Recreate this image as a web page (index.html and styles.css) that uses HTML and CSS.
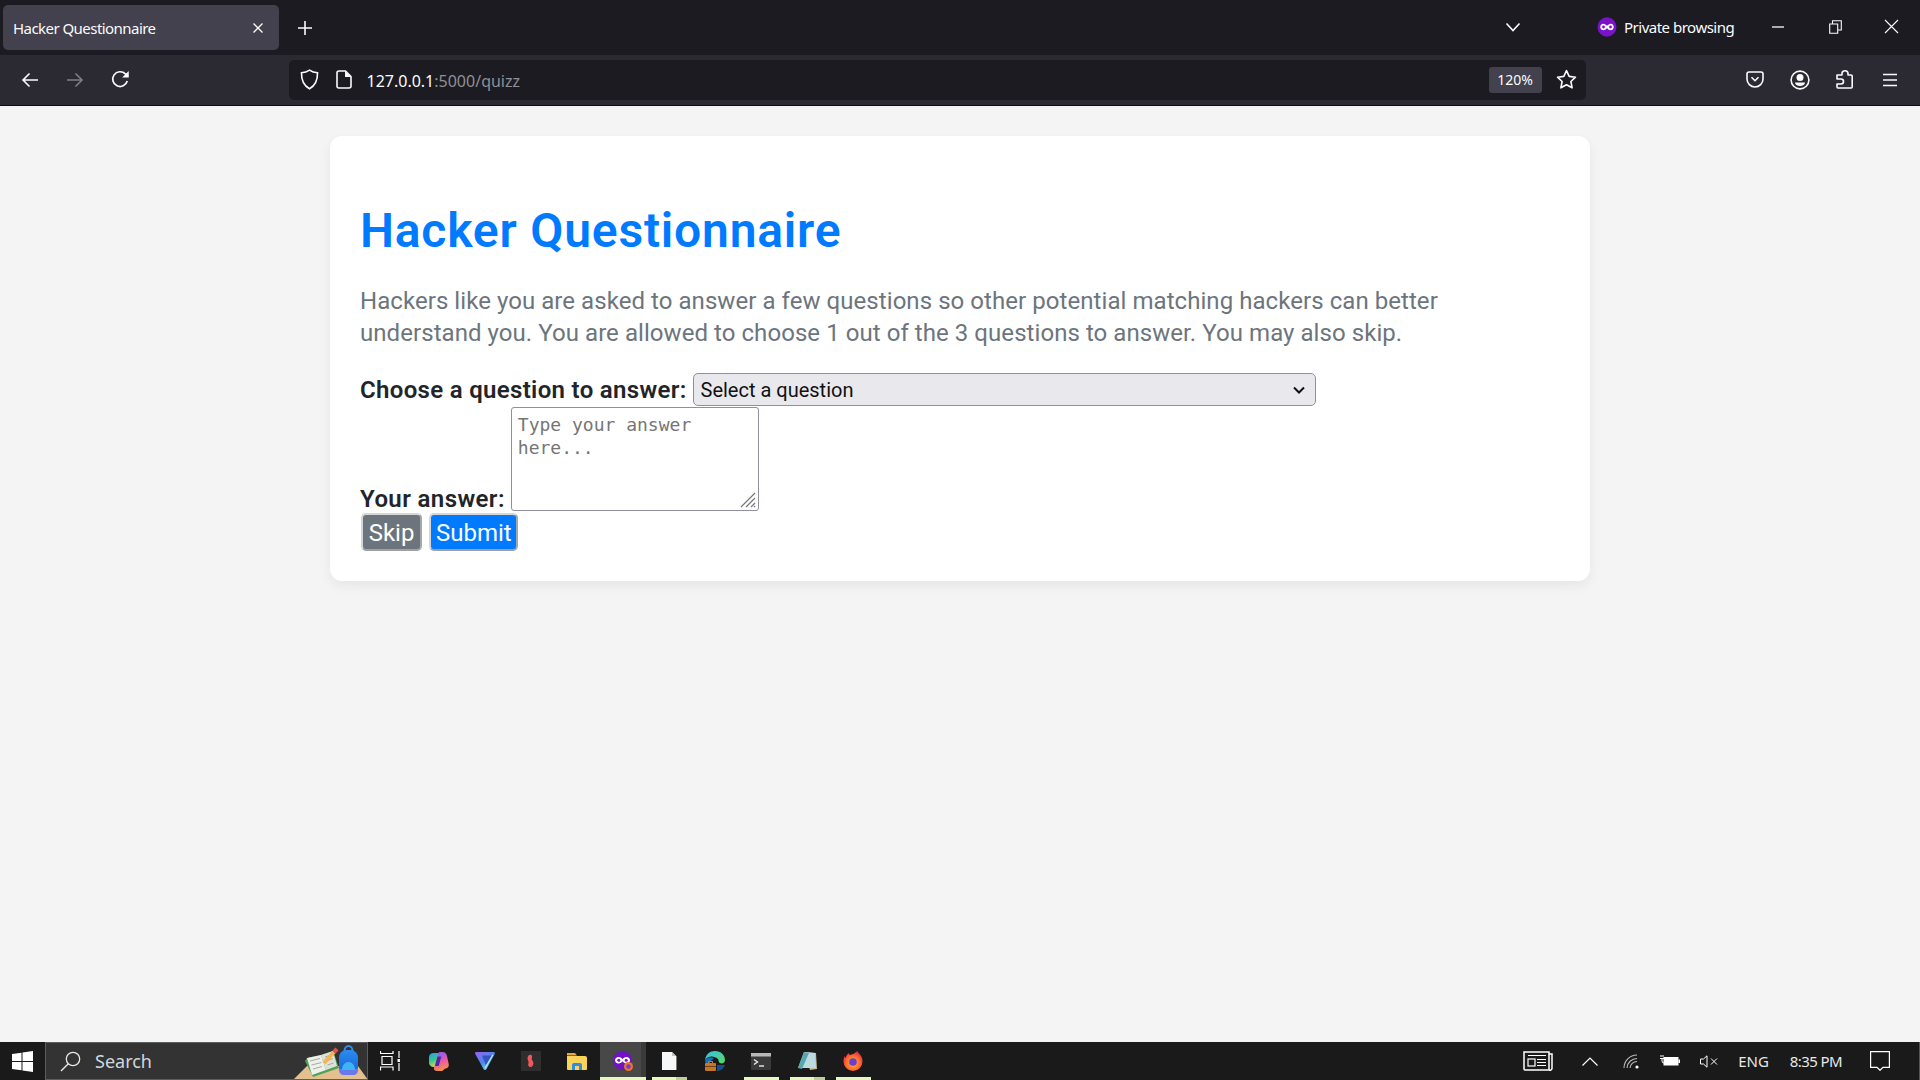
FILE: index.html
```html
<!DOCTYPE html>
<html lang="en">
<head>
<meta charset="utf-8">
<title>Hacker Questionnaire</title>
<link rel="stylesheet" href="styles.css">
</head>
<body>
<header class="browser">
  <div class="tabbar">
    <div class="tab">
      <span class="tab-title">Hacker Questionnaire</span>
      <svg class="ic" width="14" height="14" viewBox="0 0 14 14"><path d="M2.5 2.5l9 9M11.5 2.5l-9 9" class="st"/></svg>
    </div>
    <div class="newtab"><svg class="ic" width="18" height="18" viewBox="0 0 18 18"><path d="M9 2v14M2 9h14" class="st w2"/></svg></div>
    <div class="grow"></div>
    <div class="tabs-list"><svg class="ic" width="16" height="10" viewBox="0 0 16 10"><path d="M1.5 1.5L8 8.5l6.5-7" class="st w2"/></svg></div>
    <div class="private">
      <svg class="ic" width="20" height="20" viewBox="0 0 20 20"><ellipse cx="10" cy="10" rx="9.5" ry="9.7" fill="#7b12c9"/><path d="M6.3 6.8c1.4 0 2.5 1 3.7 2 1.2-1 2.3-2 3.7-2 1.9 0 3 1.4 3 3.2s-1.1 3.2-3 3.2c-1.4 0-2.5-1-3.7-2-1.2 1-2.3 2-3.7 2-1.9 0-3-1.4-3-3.2s1.1-3.2 3-3.2z" fill="#fff"/><circle cx="6.5" cy="10" r="1.4" fill="#7b12c9"/><circle cx="13.5" cy="10" r="1.4" fill="#7b12c9"/></svg>
      <span>Private browsing</span>
    </div>
    <div class="winctl"><svg class="ic" width="14" height="2" viewBox="0 0 14 2"><path d="M1 1h12" class="st"/></svg></div>
    <div class="winctl"><svg class="ic" width="13" height="14" viewBox="0 0 13 14"><path d="M.7 4h8v9.3h-8zM3.5 4V.7h8.8v9.3H8.7" class="st thin"/></svg></div>
    <div class="winctl"><svg class="ic" width="15" height="15" viewBox="0 0 15 15"><path d="M1 1l13 13M14 1L1 14" class="st thin"/></svg></div>
  </div>
  <div class="toolbar">
    <div class="tbtn"><svg class="ic" width="18" height="16" viewBox="0 0 18 16"><path d="M17 8H2M8.5 1.5L2 8l6.5 6.5" class="st w2"/></svg></div>
    <div class="tbtn dim"><svg class="ic" width="18" height="16" viewBox="0 0 18 16"><path d="M1 8h15M9.5 1.5L16 8l-6.5 6.5" class="st w2"/></svg></div>
    <div class="tbtn"><svg class="ic" width="19" height="19" viewBox="0 0 18 18"><path d="M15.4 10.5A7 7 0 1 1 13.6 3.700L16 6" class="st w2"/><path d="M16.8 1v6.200h-6.200z" fill="#fbfbfe"/></svg></div>
    <div class="urlbar">
      <svg class="ic shield" width="19" height="21" viewBox="0 0 19 21"><path d="M9.500 1.200c2.400 1.600 5 2.400 8 2.600.2 7.200-2.200 12.800-8 16-5.800-3.200-8.200-8.800-8-16 3-.2 5.600-1 8-2.600z" class="st w2"/></svg>
      <svg class="ic doc" width="16" height="19" viewBox="0 0 16 19"><path d="M3 1h6.500L15 6.500V16a2 2 0 0 1-2 2H3a2 2 0 0 1-2-2V3a2 2 0 0 1 2-2z" class="st w2"/><path d="M9 1l6 6H9z" fill="#fbfbfe"/></svg>
      <span class="url"><span class="url-host">127.0.0.1</span>:5000/quizz</span>
      <span class="grow"></span>
      <span class="zoom-badge">120%</span>
      <svg class="ic star" width="21" height="21" viewBox="0 0 21 21"><path d="M10.500 1.600l2.700 5.800 6.300.8-4.600 4.300 1.200 6.300-5.600-3.100-5.600 3.100 1.200-6.300L1.500 8.200l6.300-.8z" class="st w2 round"/></svg>
    </div>
    <div class="grow"></div>
    <div class="tbtn"><svg class="ic" width="18" height="17" viewBox="0 0 18 17"><path d="M3 1h12a2 2 0 0 1 2 2v5a8 8 0 0 1-16 0V3a2 2 0 0 1 2-2z" class="st w2"/><path d="M5.500 6.200L9 9.700l3.500-3.500" class="st w2"/></svg></div>
    <div class="tbtn"><svg class="ic" width="20" height="20" viewBox="0 0 20 20"><circle cx="10" cy="10" r="8.900" class="st w2"/><circle cx="10" cy="7.500" r="3.500" fill="#fbfbfe"/><path d="M5 12.500h10c0 2-2.200 3.500-5 3.500s-5-1.500-5-3.500z" fill="#fbfbfe"/></svg></div>
    <div class="tbtn"><svg class="ic" width="18" height="19" viewBox="0 0 18 19"><path d="M1 5h5V3.500a3 2.700 0 0 1 6 0V5h3a1.200 1.200 0 0 1 1.200 1.200V17a1 1 0 0 1-1 1H2a1 1 0 0 1-1-1v-3h4a2.500 2.500 0 0 0 0-5H1z" class="st w2 round"/></svg></div>
    <div class="tbtn"><svg class="ic" width="16" height="14" viewBox="0 0 16 14"><path d="M1 1.500h14M1 7h14M1 12.500h14" class="st w2"/></svg></div>
  </div>
</header>

<main class="page">
  <section class="card">
    <h1 class="title">Hacker Questionnaire</h1>
    <p class="lead">Hackers like you are asked to answer a few questions so other potential matching hackers can better understand you. You are allowed to choose 1 out of the 3 questions to answer. You may also skip.</p>
    <form class="quiz">
      <div class="row">
        <label class="lbl" for="q">Choose a question to answer:</label>
        <select class="sel" id="q"><option>Select a question</option></select>
      </div>
      <div class="row row-end">
        <label class="lbl" for="a">Your answer:</label>
        <textarea class="answer" id="a" placeholder="Type your answer here..."></textarea>
      </div>
      <div class="actions">
        <button class="btn btn-skip" type="button">Skip</button>
        <button class="btn btn-submit" type="button">Submit</button>
      </div>
    </form>
  </section>
</main>

<footer class="taskbar">
  <div class="start"><svg width="22" height="21" viewBox="0 0 22 21"><path d="M0 3l9.500-1.300v8.300H0zM10.500 1.500L21 0v10h-10.500zM0 11h9.500v8.300L0 18zM10.500 11H21v10l-10.500-1.500z" fill="#fff"/></svg></div>
  <div class="search">
    <svg class="search-ic" width="21" height="21" viewBox="0 0 21 21"><circle cx="13" cy="8" r="6.700" fill="none" stroke="#e8e8e8" stroke-width="1.300"/><path d="M8.300 12.700L1 20" stroke="#e8e8e8" stroke-width="1.400" fill="none"/></svg>
    <span class="search-text">Search</span>
    <svg class="search-art" width="75" height="38" viewBox="0 0 75 38"><defs><linearGradient id="pack" x1="0" y1="0" x2="0" y2="1"><stop offset="0" stop-color="#2a8cf0"/><stop offset="1" stop-color="#1560d8"/></linearGradient></defs><path d="M0 38L14 24h51l10 14z" fill="#e3c08d"/><path d="M12 19l2-3 14-3 12-4 6 17-26 9z" fill="#4fa257"/><path d="M14 16l14-3 5 15-14 5z" fill="#eef0ea"/><path d="M28 13l12-4 4 15-11 4z" fill="#dde1d8"/><path d="M17 19l10-2.500M18.500 23l10-2.500M20 27l9-2.500M32 15l6-2M33 19l7-2.500M34.500 23l6-2" stroke="#a7aca2" stroke-width="1"/><path d="M31 21L41 10" stroke="#f2b54f" stroke-width="4"/><path d="M39.500 8.500l3-3 3 3-3 3z" fill="#e8504e"/><rect x="46" y="8" width="19" height="25" rx="7.500" fill="url(#pack)"/><path d="M51.500 9a4 5 0 0 1 8 0" fill="none" stroke="#2f8fee" stroke-width="2"/><path d="M46 27h19v1c0 3-2 5-5 5h-9c-3 0-5-2-5-5z" fill="#6a78ee"/><path d="M49 28c0-5 3-8 6.500-8s6.500 3 6.500 8z" fill="#3fb4f3"/></svg>
  </div>
  <div class="task first"><svg width="20" height="20" viewBox="0 0 20 20"><path d="M.5 0v2.500h12.500V0M2 5.500h10v8H2zM.5 19.500V16h12.500v3.500M19 0v7M19 12v8" fill="none" stroke="#fff" stroke-width="1.200"/><rect x="17.500" y="8" width="3" height="3" fill="#fff"/></svg></div>
  <div class="task"><svg width="20" height="19" viewBox="0 0 20 19"><defs><linearGradient id="cpa" x1="0" y1="0" x2=".4" y2="1"><stop offset="0" stop-color="#2a9cf2"/><stop offset=".55" stop-color="#38c88a"/><stop offset="1" stop-color="#d8d84a"/></linearGradient><linearGradient id="cpb" x1=".4" y1="0" x2=".7" y2="1"><stop offset="0" stop-color="#8a5cf0"/><stop offset=".5" stop-color="#ec5aa4"/><stop offset="1" stop-color="#f59a34"/></linearGradient></defs><rect x="0" y="1" width="13" height="14" rx="4.500" fill="url(#cpa)"/><path d="M10 0h3.500c2.500 0 3.800 1.500 4.500 4l1.700 8c.5 3-1 4.500-3.500 4.500l-3 2.500H8c-2.500 0-3.500-1.500-3-3.500z" fill="url(#cpb)"/><path d="M8.500 4.500h3.800l-2.600 9.500H6z" fill="#4b2aa8"/></svg></div>
  <div class="task"><svg width="20" height="18" viewBox="0 0 20 18"><defs><linearGradient id="vt" x1="0" y1="0" x2=".8" y2="1"><stop offset="0" stop-color="#9a62f2"/><stop offset=".55" stop-color="#4a86ee"/><stop offset="1" stop-color="#86eaf0"/></linearGradient></defs><path d="M1.500 0h17c1.200 0 1.800 1 1.200 2l-8.200 15c-.7 1.200-2.300 1.200-3 0L.3 2C-.3 1 .3 0 1.500 0z" fill="url(#vt)"/><path d="M7 3.500h9.500L11 13.500z" fill="#3454c0"/><path d="M17.500 2.500l1 .5L10.500 16.500l-.7-1z" fill="#bdf3f5"/></svg></div>
  <div class="task"><svg width="20" height="20" viewBox="0 0 20 20"><rect width="20" height="20" fill="#2e2e2e"/><path d="M7.500 4.500c1-1.200 3-1 3.500.5s-1 2.500 0 4 2 2.500 1 5-3.500 2.500-4.500 1 .5-3 0-4.500-1-2-1-3 .3-2 1-3z" fill="#f0585c"/></svg></div>
  <div class="task"><svg width="20" height="19" viewBox="0 0 20 19"><path d="M0 1h8l2 2.500H0z" fill="#e8a92e"/><path d="M0 4h18a2 2 0 0 1 2 2v11a1 1 0 0 1-1 1H1a1 1 0 0 1-1-1z" fill="#fbd25a"/><path d="M5 18v-5a2 2 0 0 1 2-2h6a2 2 0 0 1 2 2v5h-3v-4H8v4z" fill="#2a8fe0"/></svg></div>
  <div class="task active"><svg width="20" height="20" viewBox="0 0 20 20"><circle cx="9.500" cy="9.500" r="9.500" fill="#7112c6"/><path d="M5.500 6c1.600 0 2.800.9 4 2 1.200-1.100 2.400-2 4-2C15.500 6 17 7.300 17 9.300s-1.500 3.200-3.500 3.200c-1.600 0-2.800-.9-4-2-1.200 1.100-2.400 2-4 2C3.500 12.500 2 11.300 2 9.300S3.500 6 5.500 6z" fill="#fff"/><circle cx="5.800" cy="9.300" r="1.500" fill="#7112c6"/><circle cx="13.200" cy="9.300" r="1.500" fill="#7112c6"/><circle cx="15.500" cy="15.500" r="4.500" fill="#f0712c"/><circle cx="15.500" cy="15.500" r="2.200" fill="#6a3fc9"/></svg></div>
  <div class="task open split"><svg width="15" height="18" viewBox="0 0 15 18"><path d="M0 0h10l4 4v14H0z" fill="#f5f7f9"/><path d="M10 0l4 4h-4z" fill="#bfc4c9"/><path d="M14 4v14h1V4z" fill="#777"/></svg></div>
  <div class="task"><svg width="20" height="20" viewBox="0 0 20 20"><defs><linearGradient id="ed" x1="0" y1="0" x2="1" y2="1"><stop offset="0" stop-color="#35c1f1"/><stop offset="1" stop-color="#5ad95c"/></linearGradient></defs><path d="M0 9C1 3 5 0 10 0c6 0 10 4 10 9 0 3-3 4-5 3s-1-3-2-4C10 5 3 4 0 9z" fill="url(#ed)"/><path d="M0 9c3-4 7-3 9-1-4 1-5 5-4 10C2 16 0 13 0 9z" fill="#0f6fb8"/><path d="M12 14h8c-1 3-4 6-8 6z" fill="#14508f"/><rect x="0" y="12" width="11" height="8" rx="1" fill="#c4762a"/><rect x="0" y="15" width="11" height="1" fill="#6d3f12"/><rect x="3.500" y="10.500" width="4" height="2" fill="none" stroke="#c4762a"/></svg></div>
  <div class="task open"><svg width="20" height="17" viewBox="0 0 20 17"><rect width="20" height="17" rx="1" fill="#3a3a3a"/><rect width="20" height="3.500" fill="#b8b8b8"/><path d="M3 6.500l3.500 2.500L3 11.500" fill="none" stroke="#eaeaea" stroke-width="1.400"/><path d="M8 13h5" stroke="#eaeaea" stroke-width="1.400"/></svg></div>
  <div class="task open split"><svg width="19" height="18" viewBox="0 0 19 18"><path d="M6 0l12 1 1 16-7 1z" fill="#c9b88f"/><path d="M6 0l11 1 1 15H0z" fill="#bcdbe0"/><path d="M6 0L0 16l4 1 7-16z" fill="#58a7b0"/></svg></div>
  <div class="task open"><svg width="20" height="20" viewBox="0 0 20 20"><defs><radialGradient id="ff" cx=".5" cy=".6" r=".6"><stop offset="0" stop-color="#ffbd3a"/><stop offset=".6" stop-color="#ff6a2c"/><stop offset="1" stop-color="#e0224f"/></radialGradient></defs><path d="M10 20A9.500 9.500 0 0 1 .5 10c0-2 .5-4 1-5 .3 1 .7 1.500 1.200 2C3 5 4 3 6 2c0 1 .4 1.800 1 2 1.500-1 3-1 3.500-1C12 1.500 13.500.8 14.500 0c.3 1.500 1.500 2.200 2.500 3.500 1.700 1.800 2.500 4 2.500 6.500A9.500 9.500 0 0 1 10 20z" fill="url(#ff)"/><circle cx="10" cy="11" r="3.800" fill="#6b3fce"/></svg></div>
  <div class="grow"></div>
  <div class="tray">
    <svg class="news" width="30" height="20" viewBox="0 0 30 20"><path d="M1 1h25v17a1 1 0 0 1-1 1H2a1 1 0 0 1-1-1zM26 3h3v14a2 2 0 0 1-3 2" fill="none" stroke="#fff" stroke-width="1.500"/><path d="M5 4.500h18M14 8.500h9M14 11.500h9M14 14.500h9" stroke="#fff" stroke-width="1.200"/><rect x="5" y="8" width="7" height="7" fill="none" stroke="#fff" stroke-width="1.200"/></svg>
    <svg class="chev" width="16" height="9" viewBox="0 0 16 9"><path d="M.5 8.500L8 1l7.500 7.500" fill="none" stroke="#fff" stroke-width="1.200"/></svg>
    <svg class="wifi" width="16" height="16" viewBox="0 0 16 16"><path d="M1 15A13 13 0 0 1 14 2M4 15A10 10 0 0 1 14 5.500M7 15a7 7 0 0 1 7-6.500" fill="none" stroke="#bbb" stroke-width="1.100"/><circle cx="14" cy="14" r="1.600" fill="#fff"/></svg>
    <svg class="batt" width="20" height="12" viewBox="0 0 20 12"><path d="M0 1h4M0 3.500h4M2 4v2a2 2 0 0 0 2 2" fill="none" stroke="#fff"/><rect x="3.500" y="2" width="15" height="8.500" fill="#fff"/><rect x="18.500" y="4.500" width="1.500" height="3.500" fill="#fff"/></svg>
    <svg class="spk" width="18" height="13" viewBox="0 0 18 13"><path d="M.5 4h3L7 .8v11.400L3.500 9h-3zM11 3.500l6 6M17 3.500l-6 6" fill="none" stroke="#fff" stroke-width="1"/></svg>
    <span class="lang">ENG</span>
    <span class="clock">8:35 PM</span>
    <svg class="notif" width="20" height="20" viewBox="0 0 20 20"><path d="M.6.600h18.800v15.800h-6.400L10 19.300l-3-2.900H.6z" fill="none" stroke="#fff" stroke-width="1.200"/></svg>
    <span class="desk"></span>
  </div>
</footer>
</body>
</html>
```

FILE: styles.css
```css
* { box-sizing: border-box; }
html, body { margin: 0; height: 100%; }
body {
  display: flex;
  flex-direction: column;
  height: 1080px;
  overflow: hidden;
  background: #f4f4f4;
  font-family: "Noto Sans", sans-serif;
}
.grow { flex: 1; }
.ic { display: block; flex: none; }
.st { fill: none; stroke: #fbfbfe; stroke-width: 1.300; }
.st.thin { stroke-width: 1.100; }
.st.w2 { stroke-width: 1.600; }
.st.round { stroke-linejoin: round; }

.browser { flex: none; color: #fbfbfe; }
.tabbar { display: flex; align-items: center; height: 55px; background: #1c1b22; }
.tab {
  display: flex; align-items: center; justify-content: space-between;
  width: 276px; height: 45px;
  margin: 0 0 0 3px;
  padding: 0 14px 0 10px;
  background: #42414d;
  border-radius: 5px;
  font-size: 15px;
}
.tab-title { letter-spacing: -.55px; white-space: nowrap; }
.newtab { display: flex; justify-content: center; width: 52px; }
.tabs-list { display: flex; justify-content: center; width: 40px; margin-right: 64px; margin-top: -2px; }
.private { display: flex; align-items: center; gap: 7px; width: 153px; font-size: 15px; margin-top: -2px; letter-spacing: -.5px; white-space: nowrap; }
.winctl { display: flex; justify-content: center; width: 56.67px; margin-top: -2px; }

.toolbar { display: flex; align-items: center; height: 51px; padding: 0 7.5px 1px 7.5px; background: #2b2a33; border-bottom: 1px solid #0c0c0d; }
.tbtn { display: flex; justify-content: center; width: 45px; }
.tbtn.dim { opacity: .4; }
.urlbar {
  display: flex; align-items: center;
  width: 1297px; height: 40px;
  margin-left: 146px;
  padding: 0 4px 0 11px;
  background: #1c1b22;
  border-radius: 5px;
}
.ic.doc { margin-left: 17px; }
.url { margin: 2px 0 0 15px; font-size: 16px; color: #8f8f96; white-space: nowrap; }
.url-host { color: #fbfbfe; }
.zoom-badge {
  display: flex; align-items: center; justify-content: center;
  width: 53px; height: 26px;
  background: #42414d;
  border-radius: 3px;
  font-size: 14px;
}
.ic.star { margin: 0 5px 0 14px; }

.page { flex: 1; padding-top: 30px; background: #f4f4f4; }
.card {
  width: 1260px;
  margin: 0 auto;
  padding: 30px;
  background: #fff;
  border-radius: 12px;
  box-shadow: 0 5px 12px rgba(0,0,0,.06);
  color: #212529;
  font-family: Roboto, sans-serif;
}
.title { margin: 36px 0 25px; font-size: 48px; line-height: 58px; font-weight: 600; color: #007bff; letter-spacing: .8px; }
.lead { max-width: 1120px; margin: 0 0 24px; font-size: 24px; line-height: 32px; letter-spacing: .06px; color: #6c757d; }
.row { display: flex; align-items: center; gap: 6px; }
.row-end { align-items: flex-end; margin-top: 1px; }
.lbl { font-size: 24px; line-height: 32px; font-weight: 600; letter-spacing: .32px; white-space: nowrap; }
.row-end .lbl { line-height: 23px; letter-spacing: .4px; }
.sel {
  appearance: none;
  width: 623px; height: 33px;
  padding: 0 7px;
  background: #e9e8ed url("data:image/svg+xml,%3Csvg xmlns='http://www.w3.org/2000/svg' width='12' height='8'%3E%3Cpath d='M1 1.500l5 5 5-5' fill='none' stroke='%23111' stroke-width='2'/%3E%3C/svg%3E") no-repeat right 10px center;
  border: 1px solid #8f8f9d;
  border-radius: 5px;
  font: 20px Roboto, sans-serif;
  color: #111;
}
.answer {
  display: block;
  width: 248px; height: 104px;
  padding: 5px 6px;
  background: #fff url("data:image/svg+xml,%3Csvg xmlns='http://www.w3.org/2000/svg' width='16' height='16'%3E%3Cpath d='M1 15L15 1M6 15L15 6M11 15l4-4M14 15l1-1' stroke='%23777' stroke-width='1.200'/%3E%3C/svg%3E") no-repeat right 2px bottom 2px;
  border: 1px solid #8f8f9d;
  border-radius: 3px;
  resize: none;
  font: 18px/23px "DejaVu Sans Mono", monospace;
}
.answer::placeholder { color: #757575; opacity: 1; }
.actions { display: flex; gap: 7px; margin: 2px 0 0 1px; }
.btn {
  height: 38px;
  padding: 2px 5px 0;
  border: 2.500px solid;
  border-color: #d6d6d6 #a8a8a8 #a0a0a0 #d6d6d6;
  border-radius: 5px;
  color: #fff;
  font: 24px/1 Roboto, sans-serif;
}
.btn-skip { width: 61px; background: #6c757d; }
.btn-submit { width: 89px; background: #007bff; }

.taskbar { flex: none; display: flex; align-items: stretch; height: 38px; background: #1a1a1a; color: #fff; }
.start { display: flex; align-items: center; justify-content: center; width: 45px; }
.search {
  display: flex; align-items: center;
  width: 323px;
  padding-left: 14px;
  background: #333;
  border: 1px solid #5d5d5d;
  overflow: hidden;
  position: relative;
}
.search-text { margin-left: 14px; font-size: 18px; color: #cfd8df; }
.search-art { position: absolute; right: -1px; bottom: -1px; }
.task { position: relative; display: flex; align-items: center; justify-content: center; width: 46px; }
.task.first { width: 44px; margin-right: 4px; }
.task.active { background: #484848; }
.task.active::before { content: ""; position: absolute; top: 0; bottom: 0; right: 0; width: 5px; background: #3a3a3a; }
.task.active::after, .task.open::after {
  content: ""; position: absolute; bottom: 0; height: 3px; background: #e6f9bd;
}
.task.active::after { left: 0; right: 0; }
.task.open::after { left: 6px; right: 5px; }
.task.split::before {
  content: ""; position: absolute; bottom: 0; height: 3px; right: 5px; width: 11px; background: #c0cf9a; z-index: 1;
}
.tray { display: flex; align-items: center; font-size: 15px; color: #e8e8e8; }
.tray .news { margin-right: 29px; }
.tray .chev { margin-right: 25px; }
.tray .wifi { margin-right: 21px; }
.tray .batt { margin-right: 20px; }
.tray .spk { margin-right: 20px; }
.lang { margin-right: 21px; }
.clock { margin-right: 28px; letter-spacing: -.6px; }
.notif { margin-right: 29px; }
.desk { align-self: stretch; width: 1px; background: #555; }
```
